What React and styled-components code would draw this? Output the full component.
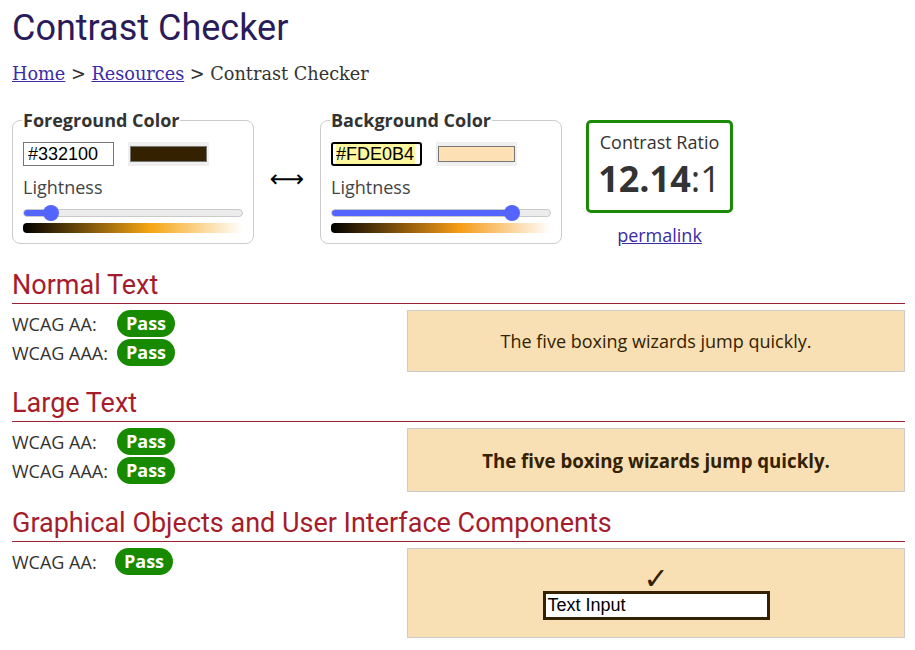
import React from 'react';
import styled, { createGlobalStyle } from 'styled-components';

const GlobalStyle = createGlobalStyle`
  body {
    margin: 0;
    background: #fff;
    font-family: "Open Sans", "Liberation Sans", sans-serif;
    color: #333;
  }
`;

const Page = styled.div`
  padding: 0 10px 0 12px;
`;

const Title = styled.h1`
  margin: 7px 0 0;
  font-family: Roboto, "Liberation Sans", sans-serif;
  font-weight: 400;
  font-size: 36px;
  line-height: 42px;
  color: #2a1b5b;
`;

const Crumbs = styled.div`
  margin-top: 13px;
  font-family: "DejaVu Serif", "Liberation Serif", serif;
  font-size: 17.7px;
  line-height: 24px;
  color: #333;
`;

const Link = styled.a`
  color: #3a2ca8;
  text-decoration: underline;
`;

const Tools = styled.div`
  display: flex;
  align-items: flex-start;
  margin-top: 22px;
`;

const Fieldset = styled.fieldset`
  width: 220px;
  margin: 0;
  padding: 0 10px 10px;
  border: 1px solid #ccc;
  border-radius: 8px;
`;

const Legend = styled.legend`
  padding: 0 1px;
  margin-left: -1px;
  font-weight: 700;
  font-size: 18px;
  line-height: 24px;
  color: #333;
`;

const InputRow = styled.div`
  display: flex;
  align-items: center;
  gap: 14px;
  margin-top: 10px;
`;

const HexInput = styled.input`
  box-sizing: border-box;
  width: 91px;
  height: 24px;
  margin: 0;
  padding: 0 ${p => (p.$focused ? '3px' : '4px')};
  font-family: "Liberation Sans", Arial, sans-serif;
  font-size: 18px;
  color: #000;
  border: ${p => (p.$focused ? '2px solid #000' : '1px solid #767676')};
  border-radius: ${p => (p.$focused ? '3px' : '0')};
  background: ${p =>
    p.$focused
      ? 'linear-gradient(to right, #fdf79e 0 79px, #fff 79px) content-box, #fff'
      : '#fff'};
  outline: none;
`;

const Swatch = styled.div`
  box-sizing: border-box;
  width: 81px;
  height: 24px;
  padding: 4px 2px;
  background: #efefef;
`;

const SwatchColor = styled.div`
  height: 100%;
  box-sizing: border-box;
  border: 1px solid #767676;
  background: ${p => p.$color};
`;

const Label = styled.div`
  margin-top: 9px;
  font-size: 18px;
  line-height: 24px;
  color: #444;
`;

const Slider = styled.div`
  position: relative;
  height: 16px;
  margin-top: 6px;
  display: flex;
  align-items: center;
`;

const Track = styled.div`
  flex: 1;
  height: 6px;
  border: 1px solid #c9c9c9;
  border-radius: 4px;
  background: #ececec;
  overflow: hidden;
`;

const Fill = styled.div`
  height: 100%;
  background: #5465ff;
`;

const Thumb = styled.div`
  position: absolute;
  top: 0;
  width: 16px;
  height: 16px;
  border-radius: 50%;
  background: #5465ff;
`;

const Gradient = styled.div`
  height: 10px;
  margin-top: 2px;
  border-radius: 4px 0 0 4px;
  background: linear-gradient(
    to right,
    #000,
    hsl(${p => p.$hue}, 92%, 52%) 58%,
    #fff
  );
`;

const Swap = styled.div`
  width: 66px;
  align-self: center;
  margin-top: 2px;
  text-align: center;
  font-family: "DejaVu Sans", sans-serif;
  font-size: 24px;
  line-height: 30px;
  color: #000;
`;

const Result = styled.div`
  margin: 12px 0 0 24px;
  display: flex;
  flex-direction: column;
  align-items: center;
`;

const RatioBox = styled.div`
  width: 141px;
  box-sizing: content-box;
  padding: 7px 0;
  border: 3px solid #1b8a07;
  border-radius: 5px;
  text-align: center;
`;

const RatioLabel = styled.div`
  font-size: 18px;
  line-height: 24px;
  color: #333;
`;

const Ratio = styled.div`
  font-size: 36px;
  line-height: 49px;
  color: #333;

  b {
    font-weight: 700;
  }
`;

const Permalink = styled(Link)`
  margin-top: 10px;
  font-size: 18px;
  line-height: 24px;
`;

const Section = styled.section`
  margin-top: ${p => p.$gap}px;
`;

const Heading = styled.h2`
  margin: 0;
  padding-bottom: 1px;
  font-family: Roboto, "Liberation Sans", sans-serif;
  font-weight: 400;
  font-size: 27px;
  line-height: 33px;
  color: #a51d2d;
  border-bottom: 1px solid #9b2233;
`;

const Body = styled.div`
  display: grid;
  grid-template-columns: 395px 1fr;
  align-items: start;
  margin-top: 6px;
`;

const Results = styled.div`
  display: flex;
  flex-direction: column;
  gap: 2px;
`;

const ResultRow = styled.div`
  display: flex;
  align-items: center;
  height: 27px;
  font-size: 18px;
  color: #333;
`;

const Level = styled.span`
  width: ${p => p.$w}px;
`;

const Pass = styled.span`
  display: inline-block;
  width: 58px;
  height: 27px;
  line-height: 27px;
  border-radius: 14px;
  background: #178a00;
  color: #fff;
  font-weight: 700;
  font-size: 18px;
  text-align: center;
`;

const Sample = styled.div`
  box-sizing: border-box;
  height: ${p => p.$h}px;
  display: flex;
  flex-direction: column;
  align-items: center;
  justify-content: center;
  border: 1px solid #ccc;
  background: #f8e0b4;
  color: #332100;
  font-size: ${p => (p.$large ? '18.67px' : '18px')};
  font-weight: ${p => (p.$large ? 700 : 400)};
`;

const Check = styled.div`
  font-family: "DejaVu Sans", sans-serif;
  font-weight: 700;
  font-size: 30px;
  line-height: 24px;
  color: #332100;
`;

const DemoInput = styled.div`
  box-sizing: border-box;
  width: 227px;
  height: 29px;
  padding: 0 2px;
  border: 3px solid #332100;
  background: #fff;
  color: #000;
  font-family: "Liberation Sans", Arial, sans-serif;
  font-size: 18px;
  line-height: 23px;
`;

function LightSlider({ value }) {
  const pos = 8 + (value / 100) * 204;
  return (
    <Slider>
      <Track>
        <Fill style={{ width: pos + 'px' }} />
      </Track>
      <Thumb style={{ left: pos - 8 + 'px' }} />
    </Slider>
  );
}

function ColorPicker({ title, hex, lightness, hue, focused }) {
  return (
    <Fieldset>
      <Legend>{title}</Legend>
      <InputRow>
        <HexInput defaultValue={hex} $focused={focused} readOnly />
        <Swatch>
          <SwatchColor $color={hex} />
        </Swatch>
      </InputRow>
      <Label>Lightness</Label>
      <LightSlider value={lightness} />
      <Gradient $hue={hue} />
    </Fieldset>
  );
}

function Checks({ levels, w = 105 }) {
  return (
    <Results>
      {levels.map(l => (
        <ResultRow key={l}>
          <Level $w={w}>{l}:</Level>
          <Pass>Pass</Pass>
        </ResultRow>
      ))}
    </Results>
  );
}

export default function App() {
  return (
    <Page>
      <GlobalStyle />
      <Title>Contrast Checker</Title>
      <Crumbs>
        <Link href="#">Home</Link> &gt; <Link href="#">Resources</Link> &gt;
        Contrast Checker
      </Crumbs>

      <Tools>
        <ColorPicker title="Foreground Color" hex="#332100" lightness={10} hue={39} />
        <Swap>⟷</Swap>
        <ColorPicker
          title="Background Color"
          hex="#FDE0B4"
          lightness={85}
          hue={36}
          focused
        />
        <Result>
          <RatioBox>
            <RatioLabel>Contrast Ratio</RatioLabel>
            <Ratio>
              <b>12.14</b>:1
            </Ratio>
          </RatioBox>
          <Permalink href="#">permalink</Permalink>
        </Result>
      </Tools>

      <Section $gap={22}>
        <Heading>Normal Text</Heading>
        <Body>
          <Checks levels={['WCAG AA', 'WCAG AAA']} />
          <Sample $h={62}>The five boxing wizards jump quickly.</Sample>
        </Body>
      </Section>

      <Section $gap={15}>
        <Heading>Large Text</Heading>
        <Body>
          <Checks levels={['WCAG AA', 'WCAG AAA']} />
          <Sample $h={64} $large>
            The five boxing wizards jump quickly.
          </Sample>
        </Body>
      </Section>

      <Section $gap={15}>
        <Heading>Graphical Objects and User Interface Components</Heading>
        <Body>
          <Checks levels={['WCAG AA']} w={103} />
          <Sample $h={90}>
            <Check>✓</Check>
            <DemoInput>Text Input</DemoInput>
          </Sample>
        </Body>
      </Section>
    </Page>
  );
}
